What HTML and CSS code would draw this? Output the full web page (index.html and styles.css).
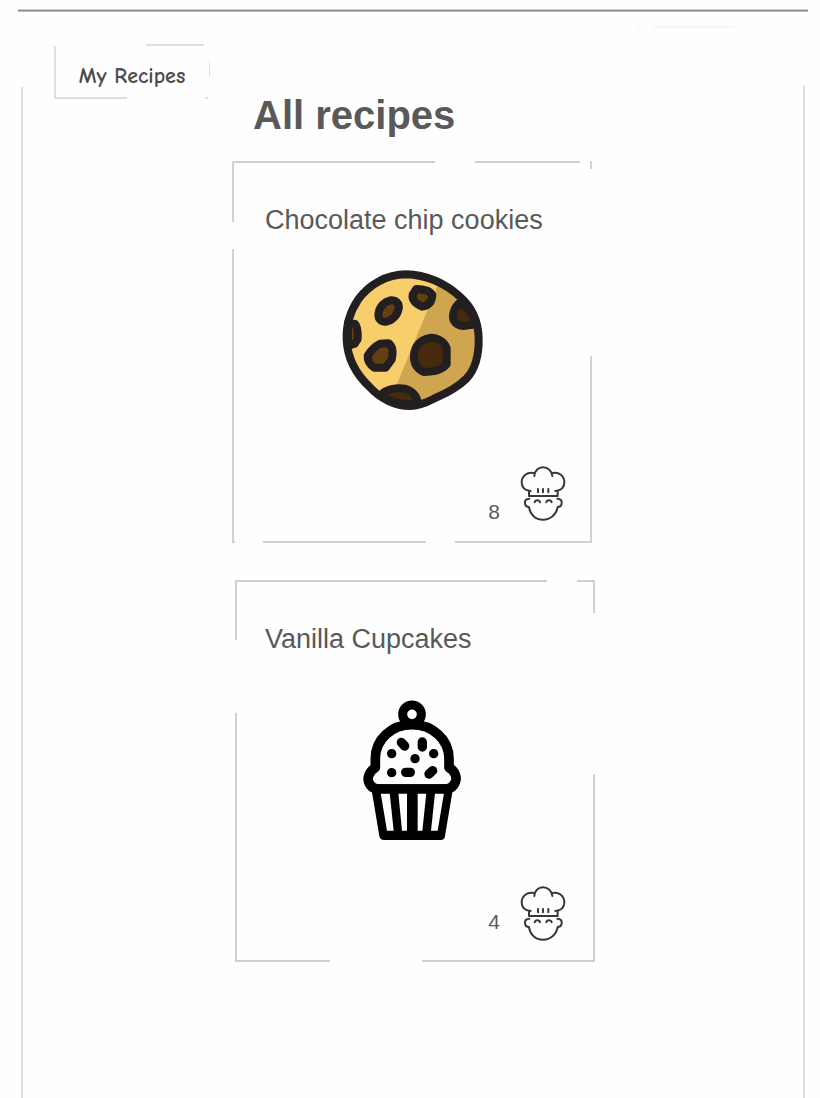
FILE: index.html
```html
<!DOCTYPE html>
<html lang="en">
<head>
<meta charset="utf-8">
<meta name="viewport" content="width=device-width, initial-scale=1">
<title>All recipes</title>
<link rel="stylesheet" href="styles.css">
</head>
<body>
<svg class="sprite" aria-hidden="true">
  <symbol id="chef" viewBox="150 48 138 168">
    <g fill="none" stroke="#383838" stroke-width="6" stroke-linecap="round" stroke-linejoin="round">
      <path d="M193 78C193 62 205 52 219 52S246 62 247 78"/>
      <path d="M192 69C172 64 155 78 155 97C155 113 165 122 182 123"/>
      <path d="M247 69C267 64 283 78 283 97C283 113 273 122 256 123"/>
      <path d="M177 123V138H263V123M204 117V127M219 117V127M235 117V127"/>
      <path d="M178 146C168 146 164 152 165 160C166 168 170 171 177 171C180 194 197 209 219 209S259 194 263 171C270 171 274 168 275 160C276 152 272 146 262 146"/>
      <path d="M194 157C196 149 208 149 210 157M229 157C231 149 243 149 245 157"/>
    </g>
  </symbol>
</svg>
<header class="topbar"></header>
<div class="frame">
  <nav class="nav">
    <button class="nav-button" type="button">My Recipes</button>
  </nav>
  <main class="content">
    <h1 class="heading">All recipes</h1>
    <article class="card card-cookies">
      <h2 class="card-title">Chocolate chip cookies</h2>
      <svg class="picture picture-cookie" viewBox="0 0 495 480" role="img" aria-label="Cookie">
        <defs>
          <path id="cookie-edge" d="M228 43C170 43 115 75 85 118C58 158 48 200 50 240C53 300 80 345 120 382C150 415 195 438 240 438C265 438 285 430 310 417C350 398 380 385 410 355C435 328 447 290 446 235C445 185 430 145 390 110C345 70 290 45 228 43Z"/>
          <clipPath id="cookie-shape"><use href="#cookie-edge"/></clipPath>
        </defs>
        <g clip-path="url(#cookie-shape)">
          <path fill="#f8cd6b" d="M0 0H495V480H0Z"/>
          <path fill="#cfa54f" d="M338 40L200 375L240 480H495V40Z"/>
        </g>
        <g stroke="#231f20" stroke-width="24" stroke-linejoin="round">
          <path fill="#643f12" d="M181 121C198 120 209 130 206 146C203 166 186 182 169 185C151 186 142 174 146 157C150 138 165 124 181 121Z"/>
          <path fill="#643f12" d="M259 87C280 88 299 90 307 105C306 125 295 137 276 140C258 132 245 122 248 104Z"/>
          <path fill="#643f12" d="M150 251L176 250C190 260 189 281 185 299L167 323L133 323C120 314 112 302 113 287C123 270 135 259 150 251Z"/>
          <path fill="#462a0e" d="M302 233C326 233 344 247 350 265L350 313C338 328 310 336 281 336C262 327 251 309 252 287C253 258 273 237 302 233Z"/>
          <path fill="#643f12" d="M54 189L75 192C84 199 84 219 83 238L74 251L54 258Z"/>
          <path fill="#462a0e" d="M388 129C371 144 366 167 371 181C379 194 390 200 410 197L437 193C430 165 418 140 388 129Z"/>
          <path fill="#462a0e" d="M152 406C168 388 199 382 224 386C247 393 261 408 263 430C222 437 182 428 152 406Z"/>
          <use href="#cookie-edge" fill="none"/>
        </g>
      </svg>
      <p class="servings"><span class="count">8</span><svg class="chef" role="img" aria-label="servings"><use href="#chef"/></svg></p>
    </article>
    <article class="card card-cupcakes">
      <h2 class="card-title">Vanilla Cupcakes</h2>
      <svg class="picture picture-cupcake" viewBox="0 0 375 480" role="img" aria-label="Cupcake">
        <circle cx="186" cy="73" r="28" fill="none" stroke="#000" stroke-width="27"/>
        <path fill="none" stroke="#000" stroke-width="29" stroke-linejoin="round" d="M76 233V206C76 148 125 104 186 104S297 148 297 206V233C315 242 322 263 316 276C311 290 302 296 288 297H84C70 296 61 290 56 276C51 263 59 242 76 233Z"/>
        <path fill="#000" fill-rule="evenodd" d="M62 283H311L285 438C284 446 280 450 272 450H102C94 450 90 446 88 438ZM92 309L111 422H131L119 309ZM145 309L156 422H171V309ZM203 309V422H217L229 309ZM255 309L243 422H263L282 309Z"/>
        <g stroke="#000" stroke-linecap="round" stroke-width="28">
          <path d="M154 157L164 168M217 156V171M167 247H181M237 252L248 242"/>
          <path d="M125 191H125.1M251 191H251.1M195 206H195.1M125 248H125.1"/>
        </g>
      </svg>
      <p class="servings"><span class="count">4</span><svg class="chef" role="img" aria-label="servings"><use href="#chef"/></svg></p>
    </article>
  </main>
</div>
</body>
</html>
```
FILE: styles.css
```css
* {
  box-sizing: border-box;
}

body {
  --line: linear-gradient(#d0d0d0, #d0d0d0);
  --pale: linear-gradient(#dedede, #dedede);
  --faint: linear-gradient(#f7f7f7, #f7f7f7);
  display: flex;
  flex-direction: column;
  min-height: 100vh;
  margin: 0;
  background: #fefefe;
  color: #595959;
  font-family: "Liberation Sans", Arial, sans-serif;
}

.sprite {
  position: absolute;
  width: 0;
  height: 0;
}

.topbar {
  height: 3px;
  margin: 9px 12px 0 18px;
  background: linear-gradient(#cccccc 1px, #8e8e8e 1px 2px, #bcbcbc 2px);
}

.frame {
  flex: 1;
  display: grid;
  grid-template-columns: 1fr 363px 1fr;
  align-items: start;
  margin: 0 15px 0 21px;
  padding-left: 1px;
  background:
    var(--pale) left bottom / 2px calc(100% - 75px) no-repeat,
    var(--pale) right bottom / 2px calc(100% - 74px) no-repeat,
    var(--faint) 90% 14px / 82px 2px no-repeat,
    var(--faint) 79% 14px / 4px 2px no-repeat;
}

.nav {
  padding: 32px 0 0 32px;
}

/* Sketched outlines: each background layer is one stroke of a broken border */
.nav-button {
  width: 156px;
  height: 55px;
  padding: 8px 0 0;
  border: 0;
  background:
    var(--pale) left bottom / 2px 53px no-repeat,
    var(--pale) 92px 0 / 58px 2px no-repeat,
    var(--pale) right 17px / 1px 15px no-repeat,
    var(--pale) left bottom / 73px 2px no-repeat,
    var(--pale) 151px bottom / 3px 2px no-repeat;
  color: #4c4c4c;
  font-family: "Comic Neue", "Comic Sans MS", Lato, sans-serif;
  font-size: 22px;
  font-weight: 700;
  line-height: 28px;
}

.content {
  display: flex;
  flex-direction: column;
  padding: 79px 0 32px;
}

.heading {
  margin: 0 0 22px;
  padding-left: 21px;
  font-size: 40px;
  line-height: 48px;
}

.card {
  display: flex;
  flex-direction: column;
  width: 360px;
  min-height: 382px;
}

.card-cookies {
  align-self: flex-start;
  margin-bottom: 37px;
  padding: 43px 26px 21px 33px;
  background:
    var(--line) 1px 0 / 202px 2px no-repeat,
    var(--line) 243px 0 / 105px 2px no-repeat,
    var(--line) right 0 / 2px 8px no-repeat,
    var(--line) right bottom / 2px 187px no-repeat,
    var(--line) right bottom / 137px 2px no-repeat,
    var(--line) 31px bottom / 163px 2px no-repeat,
    var(--line) left bottom / 3px 2px no-repeat,
    var(--line) 0 1px / 2px 60px no-repeat,
    var(--line) left bottom / 2px 294px no-repeat;
}

.card-cupcakes {
  align-self: flex-end;
  padding: 43px 29px 20px 30px;
  background:
    var(--line) 0 0 / 312px 2px no-repeat,
    var(--line) right 0 / 18px 2px no-repeat,
    var(--line) right 0 / 2px 33px no-repeat,
    var(--line) right bottom / 2px 188px no-repeat,
    var(--line) right bottom / 173px 2px no-repeat,
    var(--line) left bottom / 95px 2px no-repeat,
    var(--line) 0 0 / 2px 60px no-repeat,
    var(--line) left bottom / 2px 249px no-repeat;
}

.card-title {
  margin: 0;
  font-size: 27px;
  font-weight: 400;
  line-height: 32px;
}

.picture {
  align-self: center;
  height: 160px;
  margin-right: 6px;
}

.picture-cookie {
  width: 165px;
  margin-top: 24px;
}

.picture-cupcake {
  width: 125px;
  margin-top: 35px;
}

.servings {
  display: flex;
  justify-content: flex-end;
  align-items: flex-end;
  gap: 20px;
  margin: auto 0 0;
  font-size: 21px;
  line-height: 20px;
}

.card-cupcakes .count {
  padding-bottom: 10px;
}

.chef {
  width: 46px;
  height: 56px;
}
```
